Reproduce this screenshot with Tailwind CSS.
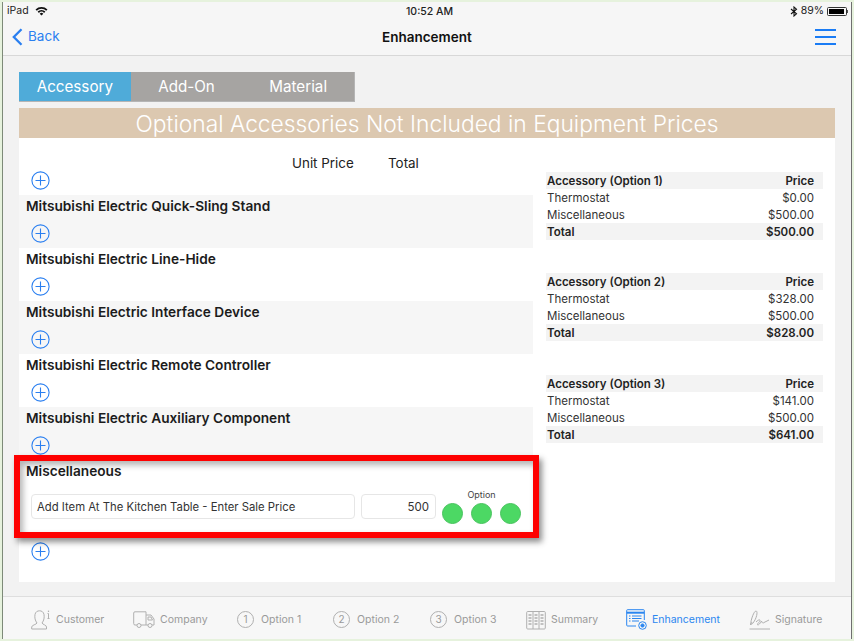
<!DOCTYPE html>
<html lang="en">
<head>
    <meta charset="UTF-8">
    <title>Enhancement</title>
    <script src="https://cdn.jsdelivr.net/npm/@tailwindcss/browser@4"></script>
</head>
<body class="w-[854px] h-[641px] overflow-hidden bg-[#e6f2dd] font-['Inter','Noto_Sans',sans-serif] antialiased">
<div class="relative w-[854px] h-[641px] pt-[2px] pb-[2px] pl-[2px] pr-[2px]">
    <div class="relative flex flex-col h-full border-l border-r border-l-[#7d8a78] border-r-[#6f6f6f] bg-[#f2f2f2]">

        <!-- status + nav -->
        <header class="h-[54px] shrink-0 bg-[#f6f6f6] border-b border-[#d8d8d8]">
            <div class="relative h-[18px] flex items-center justify-between pl-[4px] pr-[3px] text-[10.5px] text-[#222]">
                <div class="flex items-center gap-[6px]">
                    <span>iPad</span>
                    <svg width="13" height="10" viewBox="0 0 13 10"><path d="M0.5 3.4 A8.6 8.6 0 0 1 12.5 3.4 L11.2 4.8 A6.7 6.7 0 0 0 1.8 4.8 Z M2.6 5.5 A5.6 5.6 0 0 1 10.4 5.5 L9.1 6.9 A3.7 3.7 0 0 0 3.9 6.9 Z M4.7 7.7 A2.6 2.6 0 0 1 8.3 7.7 L6.5 9.6 Z" fill="#111"/></svg>
                </div>
                <span class="absolute left-[403px] top-[2px] font-medium">10:52 AM</span>
                <div class="flex items-center gap-[3px]">
                    <svg width="8" height="11" viewBox="0 0 8 11"><path d="M1 3 L6.5 7.8 L4 10 V1 L6.5 3.2 L1 8" fill="none" stroke="#111" stroke-width="1.1"/></svg>
                    <span>89%</span>
                    <div class="flex items-center">
                        <div class="w-[20px] h-[9px] border border-[#333] p-[1px] rounded-[1.5px]"><div class="h-full w-[15px] bg-black"></div></div>
                        <div class="w-[1px] h-[3px] bg-[#555]"></div>
                    </div>
                </div>
            </div>
            <div class="relative h-[33px] flex items-center justify-between pl-[9px] pr-[15px]">
                <div class="flex items-center gap-[5px] text-[#2a7ff0] text-[13.5px] leading-none">
                    <svg width="11" height="18" viewBox="0 0 11 18"><path d="M9.5 1.2 L1.8 9 L9.5 16.8" fill="none" stroke="#2a7ff0" stroke-width="2.3"/></svg>
                    <span>Back</span>
                </div>
                <span class="absolute left-[379px] top-[7px] text-[13.5px] font-semibold text-[#111]">Enhancement</span>
                <div class="flex flex-col gap-[5px] w-[21px]">
                    <div class="h-[2px] bg-[#1a7cf5]"></div>
                    <div class="h-[2px] bg-[#1a7cf5]"></div>
                    <div class="h-[2px] bg-[#1a7cf5]"></div>
                </div>
            </div>
        </header>

        <!-- content -->
        <main class="flex-1 pl-[16px] pr-[16px] pt-[16px]">
            <div class="flex w-[336px] h-[30px] bg-[#a6a4a2] text-white text-[15.2px] border-b border-r border-[#b5b5b5]">
                <div class="w-[112px] pt-[2px] bg-[#4fabd9] flex items-center justify-center">Accessory</div>
                <div class="w-[112px] pt-[2px] flex items-center justify-center">Add-On</div>
                <div class="w-[112px] pt-[2px] flex items-center justify-center">Material</div>
            </div>
            <div class="mt-[6px] h-[30px] pt-[2px] bg-[#dcc8b0] text-white text-[22.8px] font-light flex items-center justify-center">Optional Accessories Not Included in Equipment Prices</div>

            <div class="h-[444px] bg-white flex">
                <!-- left list -->
                <div class="w-[514px] shrink-0">
                    <div class="relative h-[57px]">
                        <span class="absolute left-[273px] top-[15px] text-[13.4px] text-[#222]">Unit Price</span>
                        <span class="absolute left-[369px] top-[15px] text-[13.4px] text-[#222]">Total</span>
                        <svg class="absolute left-[12px] top-[33px]" width="19" height="19" viewBox="0 0 19 19"><circle cx="9.5" cy="9.5" r="8.6" fill="none" stroke="#2a7ff0" stroke-width="1.1"/><path d="M9.5 4.5 V14.5 M4.5 9.5 H14.5" stroke="#2a7ff0" stroke-width="1.1"/></svg>
                    </div>
                    <div class="h-[53px] bg-[#f6f6f6] pl-[7px] pt-[2px] relative">
                        <h3 class="text-[13.7px] font-semibold text-[#1c1c1c] leading-[18px]">Mitsubishi Electric Quick-Sling Stand</h3>
                        <svg class="absolute left-[12px] top-[29px]" width="19" height="19" viewBox="0 0 19 19"><circle cx="9.5" cy="9.5" r="8.6" fill="none" stroke="#2a7ff0" stroke-width="1.1"/><path d="M9.5 4.5 V14.5 M4.5 9.5 H14.5" stroke="#2a7ff0" stroke-width="1.1"/></svg>
                    </div>
                    <div class="h-[53px] bg-white pl-[7px] pt-[2px] relative">
                        <h3 class="text-[13.7px] font-semibold text-[#1c1c1c] leading-[18px]">Mitsubishi Electric Line-Hide</h3>
                        <svg class="absolute left-[12px] top-[29px]" width="19" height="19" viewBox="0 0 19 19"><circle cx="9.5" cy="9.5" r="8.6" fill="none" stroke="#2a7ff0" stroke-width="1.1"/><path d="M9.5 4.5 V14.5 M4.5 9.5 H14.5" stroke="#2a7ff0" stroke-width="1.1"/></svg>
                    </div>
                    <div class="h-[53px] bg-[#f6f6f6] pl-[7px] pt-[2px] relative">
                        <h3 class="text-[13.7px] font-semibold text-[#1c1c1c] leading-[18px]">Mitsubishi Electric Interface Device</h3>
                        <svg class="absolute left-[12px] top-[29px]" width="19" height="19" viewBox="0 0 19 19"><circle cx="9.5" cy="9.5" r="8.6" fill="none" stroke="#2a7ff0" stroke-width="1.1"/><path d="M9.5 4.5 V14.5 M4.5 9.5 H14.5" stroke="#2a7ff0" stroke-width="1.1"/></svg>
                    </div>
                    <div class="h-[53px] bg-white pl-[7px] pt-[2px] relative">
                        <h3 class="text-[13.7px] font-semibold text-[#1c1c1c] leading-[18px]">Mitsubishi Electric Remote Controller</h3>
                        <svg class="absolute left-[12px] top-[29px]" width="19" height="19" viewBox="0 0 19 19"><circle cx="9.5" cy="9.5" r="8.6" fill="none" stroke="#2a7ff0" stroke-width="1.1"/><path d="M9.5 4.5 V14.5 M4.5 9.5 H14.5" stroke="#2a7ff0" stroke-width="1.1"/></svg>
                    </div>
                    <div class="h-[53px] bg-[#f6f6f6] pl-[7px] pt-[2px] relative">
                        <h3 class="text-[13.7px] font-semibold text-[#1c1c1c] leading-[18px]">Mitsubishi Electric Auxiliary Component</h3>
                        <svg class="absolute left-[12px] top-[29px]" width="19" height="19" viewBox="0 0 19 19"><circle cx="9.5" cy="9.5" r="8.6" fill="none" stroke="#2a7ff0" stroke-width="1.1"/><path d="M9.5 4.5 V14.5 M4.5 9.5 H14.5" stroke="#2a7ff0" stroke-width="1.1"/></svg>
                    </div>
                    <div class="relative pl-[7px] pt-[2px]">
                        <h3 class="text-[13.7px] font-semibold text-[#1c1c1c] leading-[18px]">Miscellaneous</h3>
                        <div class="flex mt-[14px] ml-[5px]">
                            <div class="w-[324px] h-[25px] pt-[2px] border border-[#e6e6e6] rounded-[4px] pl-[5px] flex items-center text-[11.3px] text-[#333]">Add Item At The Kitchen Table - Enter Sale Price</div>
                            <div class="ml-[6px] w-[75px] h-[25px] pt-[2px] border border-[#e6e6e6] rounded-[4px] pr-[6px] flex items-center justify-end text-[11.5px] text-[#333]">500</div>
                            <div class="ml-[6px] w-[79px] -mt-[5px]">
                                <div class="text-center text-[9px] leading-[12px] text-[#444]">Option</div>
                                <div class="flex gap-[8px] mt-[2px]">
                                    <div class="w-[21px] h-[21px] rounded-full bg-[#4cd864] border border-[#48c35e]"></div>
                                    <div class="w-[21px] h-[21px] rounded-full bg-[#4cd864] border border-[#48c35e]"></div>
                                    <div class="w-[21px] h-[21px] rounded-full bg-[#4cd864] border border-[#48c35e]"></div>
                                </div>
                            </div>
                        </div>
                        <svg class="absolute left-[12px] top-[82px]" width="19" height="19" viewBox="0 0 19 19"><circle cx="9.5" cy="9.5" r="8.6" fill="none" stroke="#2a7ff0" stroke-width="1.1"/><path d="M9.5 4.5 V14.5 M4.5 9.5 H14.5" stroke="#2a7ff0" stroke-width="1.1"/></svg>
                    </div>
                </div>

                <!-- right price tables -->
                <div class="ml-[13px] w-[277px] pt-[34px] flex flex-col text-[11.5px] leading-[16px] text-[#333]">
                    <div class="mb-[33px]">
                        <div class="flex justify-between h-[17px] pt-[1px] bg-[#f3f3f3] pl-[1px] pr-[9px] font-semibold text-[#222]"><span>Accessory (Option 1)</span><span>Price</span></div>
                        <div class="flex justify-between h-[17px] pt-[1px] pl-[1px] pr-[9px]"><span>Thermostat</span><span>$0.00</span></div>
                        <div class="flex justify-between h-[17px] pt-[1px] pl-[1px] pr-[9px]"><span>Miscellaneous</span><span>$500.00</span></div>
                        <div class="flex justify-between h-[17px] pt-[1px] bg-[#f3f3f3] pl-[1px] pr-[9px] font-semibold text-[#222]"><span>Total</span><span>$500.00</span></div>
                    </div>
                    <div class="mb-[34px]">
                        <div class="flex justify-between h-[17px] pt-[1px] bg-[#f3f3f3] pl-[1px] pr-[9px] font-semibold text-[#222]"><span>Accessory (Option 2)</span><span>Price</span></div>
                        <div class="flex justify-between h-[17px] pt-[1px] pl-[1px] pr-[9px]"><span>Thermostat</span><span>$328.00</span></div>
                        <div class="flex justify-between h-[17px] pt-[1px] pl-[1px] pr-[9px]"><span>Miscellaneous</span><span>$500.00</span></div>
                        <div class="flex justify-between h-[17px] pt-[1px] bg-[#f3f3f3] pl-[1px] pr-[9px] font-semibold text-[#222]"><span>Total</span><span>$828.00</span></div>
                    </div>
                    <div>
                        <div class="flex justify-between h-[17px] pt-[1px] bg-[#f3f3f3] pl-[1px] pr-[9px] font-semibold text-[#222]"><span>Accessory (Option 3)</span><span>Price</span></div>
                        <div class="flex justify-between h-[17px] pt-[1px] pl-[1px] pr-[9px]"><span>Thermostat</span><span>$141.00</span></div>
                        <div class="flex justify-between h-[17px] pt-[1px] pl-[1px] pr-[9px]"><span>Miscellaneous</span><span>$500.00</span></div>
                        <div class="flex justify-between h-[17px] pt-[1px] bg-[#f3f3f3] pl-[1px] pr-[9px] font-semibold text-[#222]"><span>Total</span><span>$641.00</span></div>
                    </div>
                </div>
            </div>
        </main>

        <!-- tab bar -->
        <nav class="h-[43px] shrink-0 bg-[#f7f7f7] border-t border-[#dedede] flex items-center pl-[28px] pt-[3px] text-[10.5px] text-[#9a9a9a]">
            <div class="w-[102px] flex items-center gap-[5px]">
                <svg width="20" height="20" viewBox="0 0 20 20" fill="none" stroke="#b0b0b0" stroke-width="1"><path d="M0.7 19 V17 C0.7 15 5.5 14.5 6 13 C4 10.5 3.5 7.5 4 4.5 C4.5 1.8 6.5 0.8 8.5 0.8 C10.5 0.8 12.5 1.8 13 4.5 C13.5 7.5 13 10.5 11 13 C11.5 14.5 15.5 15 15.5 17 V19 Z"/><path d="M17.5 3.5 V8.5 M16.5 8.5 H18.5 M16.5 3.5 H17.5"/><path d="M17.5 0.6 V2" stroke-width="1.2"/></svg>
                <span>Customer</span>
            </div>
            <div class="w-[104px] flex items-center gap-[5px]">
                <svg width="22" height="17" viewBox="0 0 22 17" fill="none" stroke="#b0b0b0" stroke-width="1"><path d="M4 14 H2 Q0.7 14 0.7 12.5 V2 Q0.7 0.8 2 0.8 H13 V14 H8"/><path d="M13 4 H18 L21 8 V14 H19 M15 14 H13"/><circle cx="6" cy="14.5" r="2"/><circle cx="17" cy="14.5" r="2"/><path d="M15 6 H18 L19.5 9 H15 Z"/></svg>
                <span>Company</span>
            </div>
            <div class="w-[96px] flex items-center gap-[7px]">
                <div class="w-[17px] h-[17px] rounded-full border border-[#b0b0b0] flex items-center justify-center text-[10px]">1</div>
                <span>Option 1</span>
            </div>
            <div class="w-[97px] flex items-center gap-[7px]">
                <div class="w-[17px] h-[17px] rounded-full border border-[#b0b0b0] flex items-center justify-center text-[10px]">2</div>
                <span>Option 2</span>
            </div>
            <div class="w-[96px] flex items-center gap-[7px]">
                <div class="w-[17px] h-[17px] rounded-full border border-[#b0b0b0] flex items-center justify-center text-[10px]">3</div>
                <span>Option 3</span>
            </div>
            <div class="w-[100px] flex items-center gap-[5px]">
                <svg width="20" height="20" viewBox="0 0 20 20" fill="none" stroke="#b0b0b0" stroke-width="1"><rect x="0.7" y="1.5" width="18.6" height="17.5" rx="1"/><path d="M7 1.5 V19 M13 1.5 V19"/><path d="M2.5 5 H5.5 M2.5 8 H5.5 M2.5 11 H5.5 M2.5 14 H5.5 M8.5 5 H11.5 M8.5 8 H11.5 M8.5 11 H11.5 M8.5 14 H11.5 M14.5 5 H17.5 M14.5 8 H17.5 M14.5 11 H17.5 M14.5 14 H17.5" stroke-width="1.5"/></svg>
                <span>Summary</span>
            </div>
            <div class="w-[123px] flex items-center gap-[5px] text-[#2a86f0]">
                <svg width="21" height="21" viewBox="0 0 21 21" fill="none" stroke="#2a86f0" stroke-width="1"><path d="M10 17 H1.5 Q0.7 17 0.7 16 V1.5 Q0.7 0.7 1.5 0.7 H17.5 Q18.3 0.7 18.3 1.5 V11"/><path d="M0.7 3.7 H18.3" stroke-width="2"/><path d="M3 7 H4.5 M3 9.5 H4.5 M3 12 H4.5 M6 7 H15.5 M6 9.5 H15.5 M6 12 H13"/><circle cx="16.5" cy="16.5" r="3.8"/><circle cx="16.5" cy="16.5" r="1.6" fill="#2a86f0"/></svg>
                <span>Enhancement</span>
            </div>
            <div class="flex items-center gap-[4px]">
                <svg width="22" height="20" viewBox="0 0 22 20" fill="none" stroke="#b0b0b0" stroke-width="1"><path d="M0.5 19 H21"/><path d="M1.5 15 C2 9 5 1 7 1 C9 1 8 8 4 13 C2.5 15 1.5 15 3 12 M7 12 C9 10 11 9 11 10.5 C11 12 8.5 13 8.5 14.5 C8.5 16 11 14 12.5 11 C13 13 14 13.5 15 12.5 L20 10"/></svg>
                <span>Signature</span>
            </div>
        </nav>
    </div>

    <!-- annotation highlight over the Miscellaneous row -->
    <div class="absolute left-[14px] top-[455px] w-[525px] h-[83px] border-[6px] border-[#fe0000] shadow-[3px_4px_6px_rgba(0,0,0,0.45),inset_3px_4px_6px_rgba(0,0,0,0.3)] pointer-events-none"></div>
</div>
</body>
</html>
